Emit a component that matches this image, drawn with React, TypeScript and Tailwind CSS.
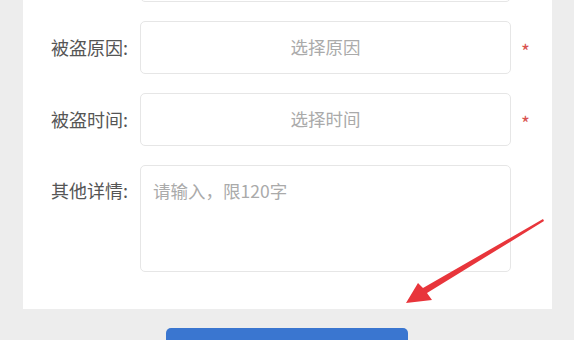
import React from 'react';

const font = { fontFamily: '"Noto Sans CJK SC", "Noto Sans", sans-serif' };

function Row({ label, placeholder, required }: { label: string; placeholder: string; required?: boolean }) {
  return (
    <div className="flex items-center">
      <span className="w-[105px] text-right text-[18px] text-[#555]">{label}</span>
      <div className="ml-3 flex h-[53px] w-[371px] items-center justify-center rounded-[5px] border border-[#e6e6e6] bg-white text-[17.5px] text-[#aaa]">
        {placeholder}
      </div>
      <span className="ml-[10px] w-[12px] pt-[6px] text-[19px] leading-none text-[#d9534f]">{required ? '*' : ''}</span>
    </div>
  );
}

export default function App() {
  return (
    <div className="relative h-[340px] w-[574px] overflow-hidden bg-[#ededed]" style={font}>
      {/* Form card, scrolled so only the bottom of the first row shows */}
      <div className="-mt-[71px] ml-[23px] w-[529px] bg-white pb-[37px] pt-5">
        <div className="flex flex-col gap-[19px]">
          <Row label="" placeholder="" />
          <Row label="被盗原因:" placeholder="选择原因" required />
          <Row label="被盗时间:" placeholder="选择时间" required />
          <div className="flex items-start">
            <span className="w-[105px] pt-[12px] text-right text-[18px] text-[#555]">其他详情:</span>
            <div className="ml-3 h-[107px] w-[371px] rounded-[5px] border border-[#e6e6e6] bg-white px-3 pt-[12px] text-[17.5px] text-[#aaa]">
              请输入，限120字
            </div>
          </div>
        </div>
      </div>

      {/* Submit button */}
      <div className="mt-[19px] flex justify-center">
        <button className="h-[40px] w-[242px] rounded-[5px] bg-[#3a76d0]" />
      </div>

      {/* Red annotation arrow */}
      <svg className="pointer-events-none absolute left-0 top-0" width="574" height="340" viewBox="0 0 574 340">
        <path d="M543 219 L544 221 L427 293 L432 300 L406 303 L418 283 L423 288 Z" fill="#e8353b" />
      </svg>
    </div>
  );
}
